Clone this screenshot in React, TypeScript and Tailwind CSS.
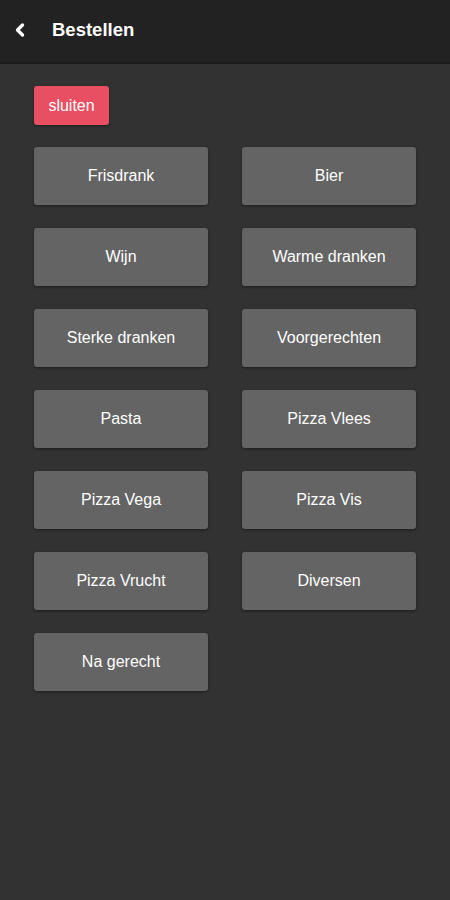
import { ChevronLeft } from 'lucide-react';

const categories = [
  'Frisdrank',
  'Bier',
  'Wijn',
  'Warme dranken',
  'Sterke dranken',
  'Voorgerechten',
  'Pasta',
  'Pizza Vlees',
  'Pizza Vega',
  'Pizza Vis',
  'Pizza Vrucht',
  'Diversen',
  'Na gerecht',
];

export default function App() {
  return (
    <div
      className="min-h-[900px] bg-[#323232] text-white"
      style={{ fontFamily: '"Liberation Sans", Arial, sans-serif' }}
    >
      <header className="flex h-[64px] items-center border-b-2 border-[#1a1a1a] bg-[#222222] pb-[2px]">
        <button className="ml-[10px] flex h-[30px] w-[20px] items-center justify-center">
          <ChevronLeft size={20} strokeWidth={4} />
        </button>
        <h1 className="ml-[22px] text-[18.5px] font-bold">Bestellen</h1>
      </header>
      <div className="px-[34px] pt-[22px]">
        <button className="h-[39px] w-[75px] rounded-[3px] bg-[#e84f62] text-[16px] shadow-[0_1px_3px_rgba(0,0,0,0.4)]">
          sluiten
        </button>
        <div className="mt-[22px] grid grid-cols-2 gap-x-[34px] gap-y-[23px]">
          {categories.map(c => (
            <button
              key={c}
              className="h-[58px] rounded-[3px] bg-[#646464] text-[16px] shadow-[0_1px_3px_rgba(0,0,0,0.45)]"
            >
              {c}
            </button>
          ))}
        </div>
      </div>
    </div>
  );
}
